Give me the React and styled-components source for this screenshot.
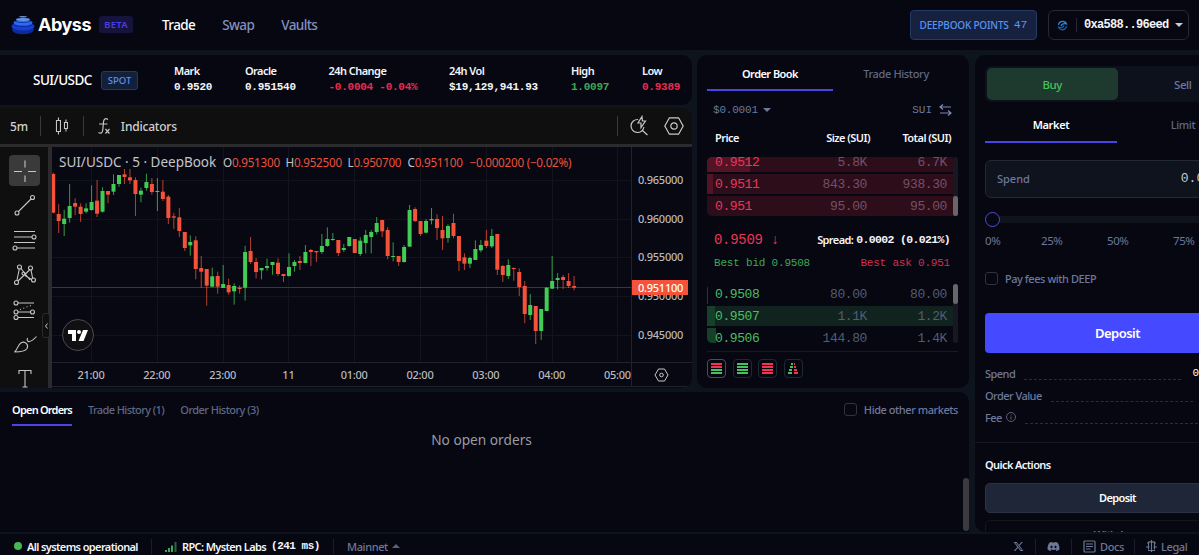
import styled, { createGlobalStyle } from "styled-components";
import { FaDiscord, FaXTwitter } from "react-icons/fa6";

const GlobalStyle = createGlobalStyle`
  * {
    box-sizing: border-box;
  }

  body {
    margin: 0;
    background-color: #060711;
    color: #f4f5fa;
    font-family: "Noto Sans", "Open Sans", sans-serif;
    overflow: hidden;
  }
`;

const Mono = styled.span`
  font-family: "Liberation Mono", monospace;
  font-size: ${(p) => p.$size || 12}px;
  font-weight: ${(p) => p.$weight || 400};
  letter-spacing: ${(p) => p.$track || 0}px;
  color: ${(p) => p.$color || "inherit"};
  white-space: pre;
`;

const Page = styled.div`
  width: 1199px;
  height: 555px;
  display: flex;
  flex-direction: column;
  overflow: hidden;
  background-color: #0e141e;
`;

/* ---------- header ---------- */

const Header = styled.header`
  height: 50px;
  flex: none;
  display: flex;
  align-items: center;
  background-color: #060711;
  padding: 0 10px 0 11px;
`;

const LogoText = styled.span`
  font-family: Inter, sans-serif;
  font-size: 18px;
  font-weight: 700;
  letter-spacing: -0.5px;
  line-height: 20px;
  padding-bottom: 1px;
  color: #fff;
  margin-left: 3px;
  width: 61px;
`;

const Beta = styled.span`
  width: 34px;
  height: 17px;
  display: flex;
  align-items: center;
  justify-content: center;
  margin-bottom: 1px;
  padding-bottom: 1px;
  border-radius: 3px;
  background-color: #16133c;
  color: #4a3fe8;
  font-size: 9.5px;
  font-weight: 600;
  letter-spacing: 0.2px;
`;

const Nav = styled.nav`
  display: flex;
  gap: 27px;
  margin-left: 29px;
  flex: 1;
`;

const NavLink = styled.a`
  font-size: 13.5px;
  font-weight: 500;
  letter-spacing: -0.6px;
  color: ${(p) => (p.$active ? "#fff" : "#8490c0")};
`;

const Points = styled.button`
  width: 127px;
  height: 30px;
  display: flex;
  align-items: center;
  justify-content: center;
  gap: 5px;
  padding: 0 0 1px;
  border: 1px solid #263a66;
  border-radius: 4px;
  background-color: #15213f;
  color: #5b93ee;
  font-family: inherit;
  font-size: 10px;
  font-weight: 500;
  letter-spacing: -0.2px;
`;

const Wallet = styled.div`
  width: 141px;
  height: 30px;
  margin-left: 11px;
  display: flex;
  align-items: center;
  padding-left: 8px;
  border: 1px solid #272833;
  border-radius: 6px;
`;

const WalletLine = styled.span`
  width: 1px;
  height: 14px;
  background-color: #272833;
  margin: 0 7px 0 8px;
`;

const Caret = styled.i`
  width: 0;
  height: 0;
  margin-left: ${(p) => p.$gap || 6}px;
  border-left: 4px solid transparent;
  border-right: 4px solid transparent;
  border-top: ${(p) => (p.$up ? "0" : "4px solid " + p.$color)};
  border-bottom: ${(p) => (p.$up ? "4px solid " + p.$color : "0")};
`;

/* ---------- page grid ---------- */

const Main = styled.main`
  height: 477px;
  flex: none;
  display: flex;
  gap: 6px;
  margin-top: 5px;
`;

const LeftZone = styled.div`
  width: 969px;
  flex: none;
  display: flex;
  flex-direction: column;
  gap: 4px;
`;

const MarketZone = styled.div`
  height: 333px;
  display: flex;
  gap: 5px;
`;

const ChartZone = styled.div`
  width: 692px;
  display: flex;
  flex-direction: column;
  gap: 3px;
`;

/* ---------- ticker ---------- */

const Ticker = styled.section`
  height: 50px;
  display: flex;
  align-items: center;
  background-color: #060711;
  border-radius: 0 10px 10px 0;
  padding-left: 33px;
`;

const Pair = styled.span`
  width: 68px;
  font-size: 13.5px;
  font-weight: 500;
  letter-spacing: -0.55px;
  color: #fff;
`;

const Spot = styled.span`
  width: 37px;
  height: 19px;
  display: flex;
  align-items: center;
  justify-content: center;
  border: 1px solid #213a60;
  border-radius: 3px;
  background-color: #12203c;
  color: #5b93ee;
  font-size: 9.5px;
  font-weight: 500;
  margin-right: 36px;
`;

const Stat = styled.div`
  width: ${(p) => p.$width}px;
  display: flex;
  flex-direction: column;
  line-height: 16px;
  padding-bottom: 2px;
`;

const StatLabel = styled.span`
  font-size: 11px;
  font-weight: 600;
  letter-spacing: -0.55px;
  color: #f4f5fa;
`;

/* ---------- chart ---------- */

const ChartPanel = styled.section`
  height: 280px;
  display: flex;
  flex-direction: column;
  background-color: #0f0f0f;
  border-radius: 0 10px 10px 0;
  overflow: hidden;
`;

const ChartToolbar = styled.div`
  height: 39px;
  flex: none;
  display: flex;
  align-items: center;
  padding: 0 8px 0 10px;
  border-bottom: 3px solid #2b2b2e;
  color: #cfcfd2;
`;

const ToolLabel = styled.span`
  font-size: 12px;
  font-weight: 500;
  letter-spacing: -0.2px;
  width: ${(p) => p.$width}px;
`;

const ToolLine = styled.span`
  width: 1px;
  height: 20px;
  background-color: #3b3b3e;
`;

const ChartBody = styled.div`
  flex: 1;
  display: flex;
`;

const DrawTools = styled.div`
  position: relative;
  width: 52px;
  border-right: 4px solid #2b2b2e;
`;

const CollapseTab = styled.span`
  position: absolute;
  left: 42px;
  top: 166px;
  width: 8px;
  height: 25px;
  border: 1px solid #2b2b2e;
  border-radius: 3px;
  background-color: #0f0f0f;
  display: flex;
  align-items: center;
  justify-content: center;
`;

const Plot = styled.div`
  position: relative;
  width: 640px;
  background-color: #070812;
`;

const Legend = styled.div`
  position: absolute;
  left: 7px;
  top: 5px;
  height: 20px;
  display: flex;
  align-items: center;
  white-space: nowrap;
  font-size: 11.7px;
  color: #c4c5ca;
`;

const LegendTitle = styled.span`
  width: 164px;
  font-size: 13.5px;
`;

const LegendItem = styled.span`
  width: ${(p) => p.$width}px;
  letter-spacing: -0.25px;

  b {
    font-weight: 400;
    color: #f0503a;
  }
`;

const TvBadge = styled.div`
  position: absolute;
  left: 10px;
  top: 172px;
  width: 32px;
  height: 32px;
  border-radius: 50%;
  border: 1px solid #4a4a4d;
  background-color: #101012;
  display: flex;
  align-items: center;
  justify-content: center;
`;

/* ---------- order book ---------- */

const Book = styled.section`
  width: 272px;
  display: flex;
  flex-direction: column;
  background-color: #060711;
  border-radius: 10px;
  padding: 0 11px 0 10px;
`;

const Tabs = styled.div`
  display: flex;
  height: ${(p) => p.$height}px;
  flex: none;
`;

const Tab = styled.div`
  width: ${(p) => p.$width || 126}px;
  flex: none;
  display: flex;
  align-items: center;
  justify-content: center;
  padding-top: ${(p) => p.$drop || 0}px;
  border-bottom: 2px solid ${(p) => (p.$active ? "#4b43e6" : "transparent")};
  color: ${(p) => (p.$active ? "#fff" : "#5f6886")};
  font-size: 11px;
  font-weight: ${(p) => (p.$active ? 600 : 500)};
  letter-spacing: ${(p) => p.$track || -0.55}px;
  white-space: nowrap;
`;

const BookControls = styled.div`
  height: 36px;
  display: flex;
  align-items: center;
  justify-content: space-between;
  padding: 2px 6px 0 6px;
  color: #6d789d;

  span,
  div {
    display: flex;
    align-items: center;
  }
`;

const BookHead = styled.div`
  display: grid;
  grid-template-columns: 75px 80px 81px;
  height: 21px;
  padding-left: 8px;
  line-height: 22px;
  font-size: 11px;
  font-weight: 600;
  letter-spacing: -0.55px;
  text-align: right;

  span:first-child {
    text-align: left;
  }
`;

const BookSide = styled.div`
  display: flex;
  margin-top: ${(p) => p.$top}px;
  height: 59px;
  flex: none;
`;

const BookRows = styled.div`
  width: 246px;
  height: 59px;
  overflow: hidden;
  display: flex;
  flex-direction: column;
  justify-content: ${(p) => (p.$end ? "flex-end" : "flex-start")};
  gap: 2px;
  border-radius: 5px 0 0 5px;
`;

const BookRow = styled.div`
  height: 20px;
  flex: none;
  display: grid;
  grid-template-columns: 75px 77px 80px;
  align-items: center;
  padding-left: 8px;
  text-align: right;
  background: linear-gradient(
    to right,
    ${(p) => p.$fill} ${(p) => p.$depth}px,
    ${(p) => p.$bg} ${(p) => p.$depth}px
  );

  span:first-child {
    text-align: left;
  }
`;

const Scroll = styled.div`
  width: 5px;
  background-color: #171821;
  border-radius: 3px;
  display: flex;
  align-items: ${(p) => (p.$end ? "flex-end" : "flex-start")};

  i {
    width: 5px;
    height: 20px;
    border-radius: 3px;
    background-color: #66666b;
  }
`;

const SpreadRow = styled.div`
  display: flex;
  align-items: center;
  justify-content: space-between;
  height: ${(p) => p.$height}px;
  padding: 0 8px 0 7px;
  font-size: 11px;
  font-weight: 600;
  letter-spacing: -0.6px;

  div {
    display: flex;
    align-items: center;
    gap: 3px;
  }
`;

const BookModes = styled.div`
  display: flex;
  gap: 6.5px;
  margin-top: 8px;
  padding-top: 7px;
  border-top: 1px solid #161923;
`;

const Mode = styled.div`
  width: 19px;
  height: 19px;
  display: flex;
  align-items: center;
  justify-content: center;
  border: 1px solid ${(p) => (p.$active ? "#4a4d62" : "#1f2a30")};
  border-radius: 4px;
`;

/* ---------- orders ---------- */

const Orders = styled.section`
  height: 140px;
  display: flex;
  flex-direction: column;
  background-color: #060711;
  border-radius: 0 10px 0 0;
`;

const OrdersBar = styled.div`
  display: flex;
  justify-content: space-between;
  padding: 0 11px 0 12px;
`;

const OrderTabs = styled.div`
  display: flex;
  height: 34px;
  gap: 16px;
`;

const CheckLabel = styled.label`
  display: flex;
  align-items: center;
  gap: 7px;
  font-size: 11px;
  font-weight: 500;
  letter-spacing: -0.45px;
  color: #6d789d;
`;

const CheckBox = styled.span`
  width: 13px;
  height: 13px;
  border: 1px solid #30323f;
  border-radius: 3px;
`;

const OrdersBody = styled.div`
  flex: 1;
  display: flex;
  align-items: flex-end;
`;

const Empty = styled.p`
  width: 963px;
  align-self: flex-start;
  margin: 4px 0 0;
  text-align: center;
  font-size: 13.7px;
  line-height: 20px;
  color: #9a9ba3;
`;

const OrdersThumb = styled.span`
  width: 6px;
  height: 53px;
  margin-bottom: 1px;
  border-radius: 3px;
  background-color: #3a3a40;
`;

/* ---------- trade form ---------- */

const TradePanel = styled.section`
  width: 285px;
  height: 477px;
  flex: none;
  overflow: hidden;
  display: flex;
  flex-direction: column;
  padding: 11px 10px 0;
  background-color: #060711;
  border-radius: 10px;
`;

const SideSwitch = styled.div`
  height: 36px;
  flex: none;
  display: flex;
  padding: 2px;
  border-radius: 6px;
  background-color: #0d111c;
`;

const SideButton = styled.div`
  flex: 1;
  display: flex;
  align-items: center;
  justify-content: center;
  border-radius: 5px;
  font-size: 11.5px;
  font-weight: 500;
  letter-spacing: -0.4px;
  color: ${(p) => (p.$active ? "#44c25a" : "#6d789d")};
  background-color: ${(p) => (p.$active ? "#1e3a2e" : "transparent")};
`;

const Field = styled.div`
  height: 38px;
  flex: none;
  display: flex;
  align-items: center;
  justify-content: space-between;
  margin-top: 17px;
  padding: 0 37px 2px 11px;
  border: 1px solid #242834;
  border-radius: 6px;
  background-color: #0e131e;
  color: #6d789d;
  font-size: 11px;
  font-weight: 500;
`;

const Slider = styled.div`
  height: 15px;
  flex: none;
  display: flex;
  align-items: center;
  margin-top: 14px;
`;

const Thumb = styled.span`
  width: 15px;
  height: 15px;
  border: 1.5px solid #5148e0;
  border-radius: 50%;
`;

const Track = styled.span`
  flex: 1;
  height: 7px;
  background-color: #0f131d;
`;

const Percents = styled.div`
  display: grid;
  grid-template-columns: 56px 66px 66px 77px;
  margin-top: 5px;
  line-height: 18px;
  color: #6d789d;
  font-size: 11.5px;
  letter-spacing: -0.4px;
`;

const FeeToggle = styled(CheckLabel)`
  margin-top: 21px;
  height: 18px;
`;

const Primary = styled.button`
  height: 40px;
  flex: none;
  margin-top: 27px;
  padding: 0;
  border: 0;
  border-radius: 4px;
  background-color: #4549ff;
  color: #fff;
  font-family: inherit;
  font-size: 13px;
  font-weight: 600;
  letter-spacing: -0.55px;
`;

const Summary = styled.dl`
  margin: 9px 0 0;
  flex: none;
`;

const SummaryRow = styled.div`
  height: 22px;
  display: flex;
  align-items: center;
  font-size: 11px;
  font-weight: 500;
  letter-spacing: -0.55px;
  color: #6d789d;
`;

const Leader = styled.span`
  flex: 1;
  height: 13px;
  margin: 0 11px 0 9px;
  border-bottom: 1px dashed #2a2c37;
`;

const QuickActions = styled.div`
  margin: 14px -10px 0;
  padding: 13px 10px 0;
  border-top: 1px solid #141822;
`;

const QuickTitle = styled.h3`
  margin: 0 0 9px;
  font-size: 11px;
  line-height: 18px;
  font-weight: 600;
  letter-spacing: -0.6px;
`;

const Secondary = styled.button`
  width: 100%;
  height: 30px;
  display: block;
  margin-bottom: 7px;
  padding: 0;
  line-height: 28px;
  border: 1px solid ${(p) => (p.$ghost ? "#12141e" : "#2c3443")};
  border-radius: 5px;
  background-color: ${(p) => (p.$ghost ? "transparent" : "#1e2637")};
  color: ${(p) => (p.$ghost ? "#6d789d" : "#fff")};
  font-family: inherit;
  font-size: 11px;
  font-weight: 600;
  letter-spacing: -0.6px;
`;

/* ---------- footer ---------- */

const Footer = styled.footer`
  flex: 1;
  display: flex;
  align-items: center;
  margin-top: 2px;
  padding-top: 3px;
  padding-left: 14px;
  background-color: #060711;
  font-size: 11px;
  font-weight: 600;
  letter-spacing: -0.6px;
  white-space: nowrap;
`;

const StatusDot = styled.i`
  width: 8px;
  height: 8px;
  border-radius: 50%;
  background-color: #45b854;
  margin-right: 5px;
`;

const FooterLine = styled.span`
  width: 1px;
  height: 15px;
  background-color: #1b1e2a;
`;

const FooterItem = styled.span`
  width: ${(p) => p.$width}px;
  display: flex;
  align-items: center;
  gap: ${(p) => p.$gap || 0}px;
  padding-left: ${(p) => p.$left || 0}px;
  color: ${(p) => (p.$muted ? "#6d7896" : "#f4f5fa")};
  font-weight: ${(p) => (p.$muted ? 500 : 600)};
  letter-spacing: ${(p) => (p.$muted ? -0.4 : -0.62)}px;
`;

const Spacer = styled.span`
  flex: 1;
`;

// [side, high, body top, body bottom, low]
const candles = [
  ["r", 98, 102, 218, 220], ["r", 192, 222, 243, 279], ["g", 209, 236, 252, 288],
  ["g", 132, 198, 234, 248], ["r", 175, 189, 200, 225], ["r", 190, 200, 222, 246],
  ["g", 190, 205, 215, 220], ["g", 136, 186, 210, 212], ["r", 120, 182, 221, 231],
  ["g", 142, 153, 215, 218], ["r", 153, 153, 164, 190], ["g", 103, 132, 155, 165],
  ["g", 105, 105, 132, 140], ["r", 87, 103, 111, 132], ["r", 87, 112, 121, 132],
  ["r", 112, 120, 162, 228], ["g", 143, 152, 164, 187], ["g", 101, 126, 144, 152],
  ["r", 114, 132, 156, 164], ["g", 114, 153, 155, 213], ["r", 120, 155, 177, 183],
  ["r", 165, 170, 234, 252], ["r", 219, 229, 233, 267], ["r", 204, 232, 273, 291],
  ["r", 276, 276, 324, 333], ["g", 286, 306, 316, 347], ["r", 289, 301, 387, 418],
  ["r", 348, 384, 395, 443], ["r", 387, 387, 437, 497], ["g", 383, 409, 440, 442],
  ["r", 395, 408, 440, 461], ["g", 375, 432, 444, 444], ["r", 416, 435, 457, 464],
  ["g", 430, 438, 454, 494], ["r", 436, 443, 447, 461], ["g", 317, 336, 443, 482],
  ["r", 291, 333, 366, 372], ["r", 354, 366, 396, 415], ["g", 384, 384, 391, 418],
  ["g", 356, 378, 384, 392], ["g", 366, 366, 375, 404], ["r", 355, 368, 402, 408],
  ["r", 402, 402, 408, 426], ["g", 340, 381, 408, 410], ["g", 360, 366, 378, 395],
  ["r", 348, 363, 369, 390], ["g", 315, 336, 369, 370], ["r", 327, 330, 336, 378],
  ["r", 333, 333, 337, 366], ["g", 282, 318, 336, 342], ["g", 262, 297, 318, 320],
  ["g", 279, 297, 299, 302], ["r", 300, 300, 339, 348], ["g", 312, 324, 330, 336],
  ["g", 291, 291, 318, 320], ["r", 297, 297, 339, 339], ["g", 292, 302, 342, 348],
  ["g", 270, 285, 309, 340], ["g", 270, 276, 291, 340], ["g", 231, 249, 276, 283],
  ["r", 240, 240, 274, 291], ["r", 261, 270, 348, 358], ["g", 307, 348, 351, 364],
  ["r", 348, 348, 366, 378], ["g", 315, 321, 366, 368], ["g", 195, 210, 320, 320],
  ["r", 202, 207, 243, 246], ["r", 243, 243, 282, 288], ["g", 237, 243, 278, 280],
  ["g", 204, 237, 241, 253], ["r", 223, 237, 264, 300], ["r", 228, 270, 295, 330],
  ["g", 253, 258, 294, 308], ["r", 221, 249, 288, 295], ["r", 288, 288, 363, 393],
  ["r", 340, 352, 371, 390], ["g", 350, 354, 371, 384], ["g", 301, 327, 360, 360],
  ["g", 300, 315, 331, 337], ["r", 270, 302, 318, 324], ["g", 267, 288, 319, 324],
  ["r", 282, 282, 389, 405], ["r", 375, 378, 405, 426], ["g", 358, 375, 408, 417],
  ["r", 382, 384, 387, 422], ["r", 385, 396, 441, 468], ["r", 423, 438, 522, 550],
  ["g", 462, 495, 525, 540], ["r", 498, 498, 573, 612], ["g", 507, 507, 573, 600],
  ["g", 442, 443, 513, 514], ["g", 348, 423, 446, 447], ["g", 399, 414, 420, 448],
  ["r", 405, 411, 420, 447], ["r", 399, 423, 438, 444], ["r", 408, 438, 443, 451],
];

const toY = (v) => v / 3 - 7;
const toX = (i) => 1.2 + i * 5.483;

const times = ["21:00", "22:00", "23:00", "11", "01:00", "02:00", "03:00", "04:00", "05:00"];
const prices = ["0.965000", "0.960000", "0.955000", "0.950000", "0.945000"];

const stats = [
  { label: "Mark", value: "0.9520", width: 71 },
  { label: "Oracle", value: "0.951540", width: 83.5 },
  { label: "24h Change", value: "-0.0004 -0.04%", width: 120.5, color: "#e92c50" },
  { label: "24h Vol", value: "$19,129,941.93", width: 122 },
  { label: "High", value: "1.0097", width: 71, color: "#3fa757" },
  { label: "Low", value: "0.9389", width: 50, color: "#e92c50" },
];

const asks = [
  { price: "0.9512", size: "5.8K", total: "6.7K", depth: 43 },
  { price: "0.9511", size: "843.30", total: "938.30", depth: 6 },
  { price: "0.951", size: "95.00", total: "95.00", depth: 0 },
];

const bids = [
  { price: "0.9508", size: "80.00", total: "80.00", depth: 1, bg: "#060711" },
  { price: "0.9507", size: "1.1K", total: "1.2K", depth: 8, bg: "#11231f" },
  { price: "0.9506", size: "144.80", total: "1.4K", depth: 9, bg: "#060711" },
];

const RED = "#ec3557";
const GREEN = "#4abf61";

function Logo() {
  return (
    <svg width="24" height="20" viewBox="0 0 24 20">
      <ellipse cx="12" cy="14.500" rx="11" ry="4.800" fill="#0c2a9c" />
      <ellipse cx="12" cy="11.300" rx="11.500" ry="4.300" fill="#143fd0" />
      <path d="M1.500 9.500C5 12 19 12 22.500 9.500" stroke="#0a1f80" strokeWidth="0.600" fill="none" />
      <ellipse cx="12" cy="7.600" rx="9.600" ry="3" fill="#2d6cf0" />
      <path d="M3.500 6.200C8 8 16 8 20.500 6.200" stroke="#0a1f80" strokeWidth="0.600" fill="none" />
      <ellipse cx="12" cy="4.400" rx="7" ry="1.500" fill="#5f92f2" />
      <ellipse cx="12" cy="1.800" rx="4" ry="0.800" fill="#7f93b8" />
    </svg>
  );
}

function HexIcon({ size }) {
  return (
    <svg width={size} height={size} viewBox="0 0 20 20" fill="none" stroke="#c9c9cc" strokeWidth="1.2">
      <path d="M5.4 1.8h9.2L19.2 10l-4.6 8.2H5.4L0.8 10z" />
      <circle cx="10" cy="10" r="3.2" />
    </svg>
  );
}

function ToolIcons() {
  return (
    <svg width="48" height="241" viewBox="0 0 48 241" fill="none" stroke="#c6c6c9" strokeWidth="1.1">
      <rect x="9" y="8" width="31" height="31" rx="4" fill="#3a3a3a" stroke="none" />
      <path d="M14 24.500h8M28 24.500h8M25 13.500v7M25 28.500v6.500" />
      <path d="M18.500 64.500L31 52" />
      <circle cx="17" cy="66" r="2" />
      <circle cx="32.500" cy="50.500" r="2" />
      <path d="M14 84.500h21M14 90h18M14 95.500h21M17 101h18" />
      <circle cx="34" cy="90" r="2" />
      <circle cx="15" cy="101" r="2" />
      <path d="M17 133l2.300-11M21 121.500l9 11.500M29.500 123L18 134M31 123l1.700 8.500M25 128.500l6.500 4" />
      <circle cx="19.500" cy="120" r="2" />
      <circle cx="30.500" cy="121" r="2" />
      <circle cx="16.500" cy="135.500" r="2" />
      <circle cx="33.500" cy="133" r="2" />
      <circle cx="23.500" cy="126.500" r="1.500" />
      <path d="M18 156h16M18 165h12.500M18 170.500h16" />
      <path d="M20 162.500l11-4" strokeDasharray="1 2.500" />
      <circle cx="16" cy="156" r="2" />
      <circle cx="16" cy="165" r="2" />
      <circle cx="16" cy="170.500" r="2" />
      <circle cx="32.500" cy="165" r="2" />
      <path d="M14.500 205c3-1.500 2.500-7 7-9.500 4-1.500 7.500 2.500 5.500 6-2 3-7 3.500-12.500 3.500zM27.500 191c-1.500 5 3 5 9-1.500" />
      <path d="M19 227v-3.500h12v3.500M25 223.500v16.500M22.500 240h5" />
    </svg>
  );
}

function Chart() {
  return (
    <svg width="640" height="241" viewBox="0 0 640 241">
      <g stroke="#12141d">
        {prices.map((p, i) => (
          <path key={p} d={`M0 ${33.5 + Math.round(i * 38.7)}H579`} />
        ))}
        {times.map((t, i) => (
          <path key={t} d={`M${Math.round(39 + i * 65.8) + 0.5} 0V215`} />
        ))}
        <path d="M0 215.500H640M579.500 0V240" stroke="#20222c" />
        <path d="M0 239.500H640" stroke="#20222c" />
      </g>
      <rect x="0" y="140" width="579" height="1" fill="#6b2426" />
      {candles.map(([side, high, top, bottom, low], i) => (
        <g key={i} fill={side === "g" ? "#42cc55" : "#f6523a"}>
          <rect x={toX(i) - 0.5} y={toY(high)} width="1" height={(low - high) / 3} opacity="0.75" />
          <rect x={toX(i) - 2} y={toY(top)} width="4" height={Math.max(1, (bottom - top) / 3)} />
        </g>
      ))}
      <g fill="#b9babf" fontSize="11" fontWeight="500" letterSpacing="-0.25" fontFamily="Noto Sans, sans-serif">
        {prices.map((p, i) => (
          <text key={p} x="586" y={37 + i * 38.7}>{p}</text>
        ))}
        {times.map((t, i) => (
          <text key={t} x={39 + i * 65.8} y="232" textAnchor="middle">{t}</text>
        ))}
      </g>
      <rect x="580" y="133" width="56" height="15" fill="#f6523a" />
      <text x="586" y="144.500" fill="#fff" fontSize="11" fontWeight="500" letterSpacing="-0.25" fontFamily="Noto Sans, sans-serif">0.951100</text>
      <g transform="translate(603 221)" fill="none" stroke="#c9c9cc">
        <path d="M3.500 1h6l3.500 6-3.500 6h-6L0 7z" />
        <circle cx="6.500" cy="7" r="1.800" />
      </g>
    </svg>
  );
}

function ModeIcon({ colors }) {
  return (
    <svg width="11" height="11" viewBox="0 0 11 11">
      {colors.map((c, i) => (
        <rect key={i} x="0" y={i * 3} width="11" height="2" fill={c} />
      ))}
    </svg>
  );
}

function BookLine({ row, color, muted, bg, fill }) {
  return (
    <BookRow $bg={bg} $fill={fill} $depth={row.depth}>
      <Mono $size={13} $track={-0.4} $color={color}>{row.price}</Mono>
      <Mono $size={13} $track={-0.4} $color={muted}>{row.size}</Mono>
      <Mono $size={13} $track={-0.4} $color={muted}>{row.total}</Mono>
    </BookRow>
  );
}

function OrderBook() {
  return (
    <Book>
      <Tabs $height={36}>
        <Tab $active $drop={3}>Order Book</Tab>
        <Tab $drop={3} $track={-0.35}>Trade History</Tab>
      </Tabs>
      <BookControls>
        <div>
          <Mono $size={11} $track={-0.2}>$0.0001</Mono>
          <Caret $color="#6d789d" $gap={5} />
        </div>
        <div>
          <Mono $size={11}>SUI</Mono>
          <svg width="13" height="12" viewBox="0 0 13 12" fill="none" stroke="#7d88ad" strokeWidth="1.2" style={{ marginLeft: 7 }}>
            <path d="M12 3H1M4 0.500L1 3l3 2.500M1 9h11M9 6.500L12 9l-3 2.500" />
          </svg>
        </div>
      </BookControls>
      <BookHead>
        <span>Price</span>
        <span>Size (SUI)</span>
        <span>Total (SUI)</span>
      </BookHead>
      <BookSide $top={9}>
        <BookRows $end>
          {asks.map((row) => (
            <BookLine key={row.price} row={row} color={RED} muted="#745068" bg="#2e0d1a" fill="#551426" />
          ))}
        </BookRows>
        <Scroll $end><i /></Scroll>
      </BookSide>
      <SpreadRow $height={47}>
        <Mono $size={14} $track={-0.3} $color={RED}>0.9509 ↓</Mono>
        <div>
          Spread:
          <Mono $size={11.5} $weight={700} $track={-0.65}>0.0002 (0.021%)</Mono>
        </div>
      </SpreadRow>
      <SpreadRow $height={0}>
        <Mono $size={11} $track={-0.2} $color="#3fa757">Best bid 0.9508</Mono>
        <Mono $size={11} $track={-0.2} $color="#d22e4e">Best ask 0.951</Mono>
      </SpreadRow>
      <BookSide $top={21}>
        <BookRows>
          {bids.map((row) => (
            <BookLine key={row.price} row={row} color={GREEN} muted="#525c76" bg={row.bg} fill="#16402a" />
          ))}
        </BookRows>
        <Scroll><i /></Scroll>
      </BookSide>
      <BookModes>
        <Mode $active><ModeIcon colors={[RED, RED, GREEN, GREEN]} /></Mode>
        <Mode><ModeIcon colors={[GREEN, GREEN, GREEN, GREEN]} /></Mode>
        <Mode><ModeIcon colors={[RED, RED, RED, RED]} /></Mode>
        <Mode>
          <svg width="11" height="11" viewBox="0 0 11 11">
            <path d="M3 0h2v2H3zM2 3h3v2H2zM1 6h3v2H1zM0 9h4v2H0z" fill={GREEN} />
            <path d="M6 0h1v2H6zM6 3h2v2H6zM6 6h3v2H6zM6 9h4v2H6z" fill={RED} />
          </svg>
        </Mode>
      </BookModes>
    </Book>
  );
}

function TradeForm() {
  return (
    <TradePanel>
      <SideSwitch>
        <SideButton $active>Buy</SideButton>
        <SideButton>Sell</SideButton>
      </SideSwitch>
      <Tabs $height={41}>
        <Tab $active $width={132} $drop={6} $track={-0.35}>Market</Tab>
        <Tab $width={132} $drop={6} $track={-0.35}>Limit</Tab>
      </Tabs>
      <Field>
        Spend
        <Mono $size={13} $color="#c9cad0">0.00</Mono>
      </Field>
      <Slider>
        <Thumb />
        <Track />
      </Slider>
      <Percents>
        <span>0%</span>
        <span>25%</span>
        <span>50%</span>
        <span>75%</span>
      </Percents>
      <FeeToggle>
        <CheckBox />
        Pay fees with DEEP
      </FeeToggle>
      <Primary>Deposit</Primary>
      <Summary>
        <SummaryRow>
          Spend
          <Leader />
          <Mono $size={11} $track={-0.2} $color="#fff">0.00 USDC</Mono>
        </SummaryRow>
        <SummaryRow>
          Order Value
          <Leader />
          <Mono $size={11} $color="#fff">$0.0000</Mono>
        </SummaryRow>
        <SummaryRow>
          Fee
          <svg width="10" height="10" viewBox="0 0 10 10" fill="none" stroke="#59617d" style={{ marginLeft: 4 }}>
            <circle cx="5" cy="5" r="4.500" />
            <path d="M5 4.500v3M5 2.500v1" />
          </svg>
          <Leader />
          <Mono $size={11} $color="#fff">0.00</Mono>
        </SummaryRow>
      </Summary>
      <QuickActions>
        <QuickTitle>Quick Actions</QuickTitle>
        <Secondary>Deposit</Secondary>
        <Secondary $ghost>Withdraw</Secondary>
      </QuickActions>
    </TradePanel>
  );
}

function App() {
  return (
    <Page>
      <GlobalStyle />
      <Header>
        <Logo />
        <LogoText>Abyss</LogoText>
        <Beta>BETA</Beta>
        <Nav>
          <NavLink $active>Trade</NavLink>
          <NavLink>Swap</NavLink>
          <NavLink>Vaults</NavLink>
        </Nav>
        <Points>
          DEEPBOOK POINTS
          <Mono $size={11.5}>47</Mono>
        </Points>
        <Wallet>
          <svg width="11" height="11" viewBox="0 0 11 11" fill="none" strokeWidth="1.300">
            <path d="M1.500 5C1.500 2.500 4 1 6.500 1.500c2 0.300 2.800 1.500 3 2.500C7.500 3.200 4.500 3.800 4 6" stroke="#2f86d8" />
            <path d="M9.500 6c-0.300 2.500-2.500 4-5 3.700C2.800 9.500 1.800 8.500 1.500 7.200 3.500 8 6.500 7.500 7 5.500" stroke="#1d5ea8" />
          </svg>
          <WalletLine />
          <Mono $size={12} $weight={700} $track={-0.7}>0xa588..96eed</Mono>
          <Caret $color="#c9cbd6" $gap={6} />
        </Wallet>
      </Header>

      <Main>
        <LeftZone>
          <MarketZone>
            <ChartZone>
              <Ticker>
                <Pair>SUI/USDC</Pair>
                <Spot>SPOT</Spot>
                {stats.map((s) => (
                  <Stat key={s.label} $width={s.width}>
                    <StatLabel>{s.label}</StatLabel>
                    <Mono $size={11} $weight={700} $track={-0.25} $color={s.color}>{s.value}</Mono>
                  </Stat>
                ))}
              </Ticker>
              <ChartPanel>
                <ChartToolbar>
                  <ToolLabel $width={30}>5m</ToolLabel>
                  <ToolLine />
                  <svg width="42" height="20" viewBox="0 0 42 20" fill="none" stroke="#c6c6c9" strokeWidth="1.100">
                    <path d="M15.500 4.500h4v11h-4zM17.500 1.500v3M17.500 15.500v3M23.500 6.500h3v6h-3zM25 3.500v3M25 12.500v3" />
                  </svg>
                  <ToolLine />
                  <svg width="37" height="20" viewBox="0 0 37 20" fill="none" stroke="#c6c6c9" strokeWidth="1.200">
                    <path d="M24 3.500c-2.500-2-4.200-0.500-4.500 2.500L18.800 14c-0.300 3-2 4-4.300 2.500M15 8h8.500M21.500 13l4 4.500M25.500 13l-4 4.500" />
                  </svg>
                  <ToolLabel $width={497}>Indicators</ToolLabel>
                  <ToolLine />
                  <svg width="46" height="22" viewBox="0 0 46 22" fill="none" stroke="#c6c6c9" strokeWidth="1.200">
                    <path d="M20 4.500A6.500 6.500 0 1 0 26 12M24.500 15.500L29.500 20M24 1.500l-4 6.500h3v4.500l4.500-6.500h-3z" />
                  </svg>
                  <HexIcon size={20} />
                </ChartToolbar>
                <ChartBody>
                  <DrawTools>
                    <ToolIcons />
                    <CollapseTab>
                      <svg width="3" height="6" viewBox="0 0 3 6" fill="none" stroke="#c6c6c9">
                        <path d="M2.500 0.500L0.500 3l2 2.500" />
                      </svg>
                    </CollapseTab>
                  </DrawTools>
                  <Plot>
                    <Chart />
                    <Legend>
                      <LegendTitle>SUI/USDC · 5 · DeepBook</LegendTitle>
                      <LegendItem $width={62.5}>O<b>0.951300</b></LegendItem>
                      <LegendItem $width={62}>H<b>0.952500</b></LegendItem>
                      <LegendItem $width={60}>L<b>0.950700</b></LegendItem>
                      <LegendItem $width={62}>C<b>0.951100</b></LegendItem>
                      <LegendItem $width={110}><b>−0.000200 (−0.02%)</b></LegendItem>
                    </Legend>
                    <TvBadge>
                      <svg width="20" height="11" viewBox="0 0 20 11" fill="#fff">
                        <path d="M0 0h8v11H4V4H0z" />
                        <circle cx="11" cy="2" r="2" />
                        <path d="M15 0h5l-4.500 11h-5z" />
                      </svg>
                    </TvBadge>
                  </Plot>
                </ChartBody>
              </ChartPanel>
            </ChartZone>
            <OrderBook />
          </MarketZone>

          <Orders>
            <OrdersBar>
              <OrderTabs>
                <Tab $active $width={60} $drop={3} $track={-0.8}>Open Orders</Tab>
                <Tab $width={76} $drop={3} $track={-0.6}>Trade History (1)</Tab>
                <Tab $width={79} $drop={3} $track={-0.55}>Order History (3)</Tab>
              </OrderTabs>
              <CheckLabel>
                <CheckBox />
                Hide other markets
              </CheckLabel>
            </OrdersBar>
            <OrdersBody>
              <Empty>No open orders</Empty>
              <OrdersThumb />
            </OrdersBody>
          </Orders>
        </LeftZone>
        <TradeForm />
      </Main>

      <Footer>
        <StatusDot />
        <FooterItem $width={124}>All systems operational</FooterItem>
        <FooterLine />
        <FooterItem $width={181} $left={13} $gap={5}>
          <svg width="12" height="11" viewBox="0 0 12 11" fill="#3fa757">
            <path d="M0 9h2v2H0zM3 7h2v4H3zM6 4.500h2V11H6z" />
            <path d="M9.500 1h2v10h-2z" opacity="0.600" />
          </svg>
          RPC: Mysten Labs
          <Mono $size={11} $weight={700} $track={-0.5}>(241 ms)</Mono>
        </FooterItem>
        <FooterLine />
        <FooterItem $width={80} $left={13} $muted>
          Mainnet
          <Caret $up $color="#59617d" $gap={4} />
        </FooterItem>
        <Spacer />
        <FooterItem $width={22} $muted><FaXTwitter size={11} /></FooterItem>
        <FooterLine />
        <FooterItem $width={35} $left={11} $muted><FaDiscord size={13} /></FooterItem>
        <FooterLine />
        <FooterItem $width={62} $left={11} $gap={4} $muted>
          <svg width="13" height="13" viewBox="0 0 13 13" fill="none" stroke="#6d7896" strokeWidth="1.200">
            <rect x="1" y="1" width="11" height="11" rx="1" />
            <path d="M3 4h7M3 6.500h7M3 9h4.500" />
          </svg>
          Docs
        </FooterItem>
        <FooterLine />
        <FooterItem $width={64} $left={11} $gap={4} $muted>
          <svg width="11" height="12" viewBox="0 0 11 12" fill="none" stroke="#6d7896" strokeWidth="1.100">
            <path d="M5.500 0v12M1.500 3.500c1-2.500 7-2.500 8 0M2.500 3v6.500M8.500 3v6.500M0 7h3.500M7.500 7H11M2 10.500h7" />
          </svg>
          Legal
        </FooterItem>
      </Footer>
    </Page>
  );
}

export default App;
